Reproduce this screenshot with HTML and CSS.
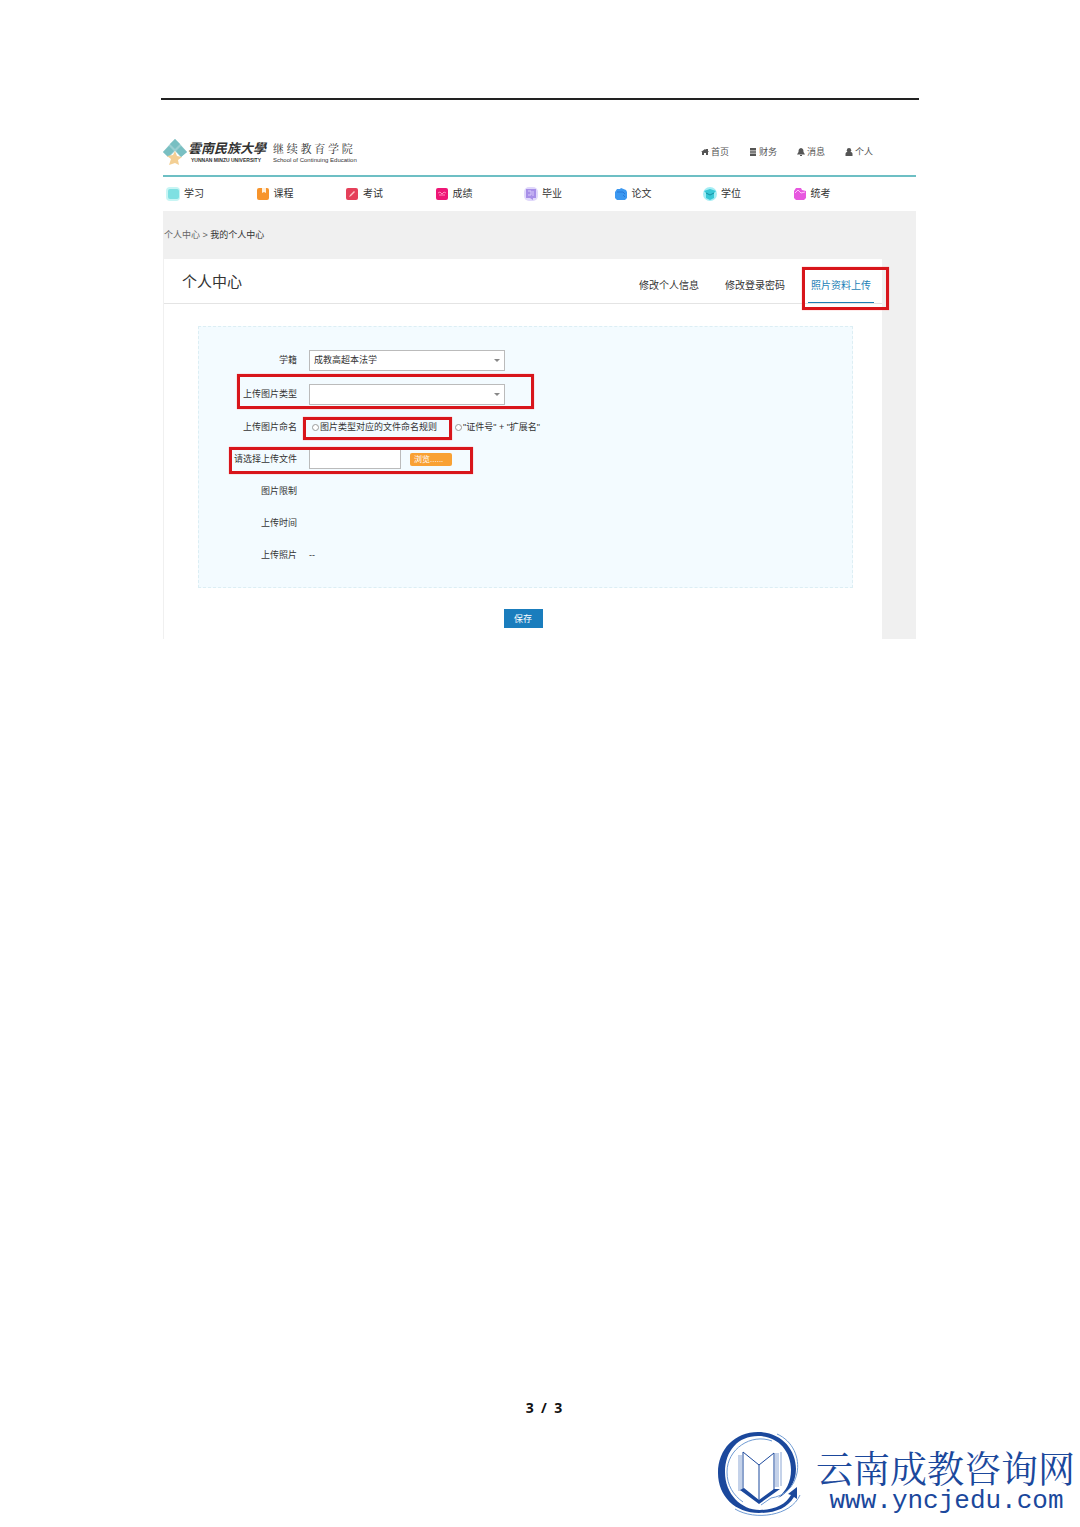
FILE: index.html
```html
<!DOCTYPE html>
<html lang="zh-CN">
<head>
<meta charset="utf-8">
<meta name="viewport" content="width=device-width, initial-scale=1">
<title>个人中心</title>
<link rel="stylesheet" href="styles.css">
</head>
<body>
<main class="sheet">
  <div class="portal">
    <header class="top">
      <div class="brand">
        <svg class="emblem" viewBox="0 0 24 26" aria-hidden="true">
          <path d="M12 0l5 5-5 5-5-5zM6 7l5 5-6 6-5-5zM18 7l6 6-6 5-5-6z" fill="#79bfc2"/>
          <path d="M7 5l5-5 5 5 7 8-6 5-6-6-6 6-6-5z" fill="#79bfc2" opacity=".75"/>
          <path d="M12 12l2 5 5 1-4 3 1 5-4-2-6 2 2-6-4-3 6-1z" fill="#f3cf94"/>
        </svg>
        <div class="school">
          <span class="school-name">雲南民族大學</span>
          <span class="school-en">YUNNAN MINZU UNIVERSITY</span>
        </div>
        <div class="college">
          <span class="college-name">继 续 教 育 学 院</span>
          <span class="college-en">School of Continuing Education</span>
        </div>
      </div>
      <nav class="quick">
        <a href="#"><svg viewBox="0 0 8 8"><path d="M0 4l4-3 1 .8V1h2v2l1 1H7v3H5V5H3v2H1V4z"/></svg>首页</a>
        <a href="#"><svg viewBox="0 0 8 8"><path d="M1 0h6v2H1zM1 2.5h6v1.2H1zM1 4.3h6v1.2H1zM1 6.1h6V8H1z"/></svg>财务</a>
        <a href="#"><svg viewBox="0 0 8 8"><path d="M4 0c2 .3 2.500 1.500 2.500 4L8 6.500H0L1.500 4C1.500 1.500 2 .3 4 0zM3 7h2v1H3z"/></svg>消息</a>
        <a href="#"><svg viewBox="0 0 8 8"><circle cx="4" cy="2.200" r="2.200"/><path d="M.5 8V6c0-1.500 1-2 2-2h3c1 0 2 .5 2 2v2z"/></svg>个人</a>
      </nav>
    </header>

    <nav class="menu">
      <a href="#"><svg viewBox="0 0 14 14"><rect width="14" height="14" rx="4" fill="#c8f5f4"/><rect x="2" y="2" width="11" height="10" rx="2" fill="#7fe0e2"/></svg>学习</a>
      <a href="#"><svg viewBox="0 0 14 14"><rect x="1" y="1" width="12" height="12" rx="2" fill="#f7942c"/><path d="M6 1h4v5L8 5 6 6z" fill="#fff0dc"/></svg>课程</a>
      <a href="#"><svg viewBox="0 0 14 14"><rect x="1" y="1" width="12" height="12" rx="2" fill="#e5405a"/><path d="M4 10l1-2 4-4 1 1-4 4z" fill="#ffc4c8"/></svg>考试</a>
      <a href="#"><svg viewBox="0 0 14 14"><rect x="1" y="1" width="12" height="12" rx="2" fill="#ee1676"/><path d="M3 6l2-1 2 2 2-2 2 1M4 8h6" fill="none" stroke="#ff8abb"/></svg>成绩</a>
      <a href="#"><svg viewBox="0 0 14 14"><rect width="14" height="14" rx="5" fill="#e0d8fb"/><path d="M2 2h10v9H9v2L6 11H2z" fill="#a78fe8"/><path d="M4 4h3v4H4M9 4v5" fill="none" stroke="#d8cbfa"/></svg>毕业</a>
      <a href="#"><svg viewBox="0 0 14 14"><path d="M1 5l2-3h3l1-1 5 2 1 2v6l-2 2H3l-2-2z" fill="#3c98f0"/><path d="M3 5h6l2 2M9 8l2 2" fill="none" stroke="#2678d8"/></svg>论文</a>
      <a href="#"><svg viewBox="0 0 14 14"><circle cx="7" cy="7" r="7" fill="#a5edf4"/><path d="M1 4l6-2 6 2-2 2v5l-4 2-4-2V6z" fill="#38c8d6"/><path d="M3 6l4 2 4-2" fill="none" stroke="#168fa2"/></svg>学位</a>
      <a href="#"><svg viewBox="0 0 14 14"><path d="M1 4l2-3h5l1 2 4 1v7l-2 2H3l-2-2z" fill="#e757df"/><path d="M2 6l3-3 3 3 4-1" fill="none" stroke="#ffc0fa"/></svg>统考</a>
    </nav>

    <div class="content">
      <p class="crumbs"><a href="#">个人中心</a> &gt; <b>我的个人中心</b></p>
      <section class="panel">
        <div class="panel-head">
          <h1>个人中心</h1>
          <nav class="tabs">
            <a href="#">修改个人信息</a>
            <a href="#">修改登录密码</a>
            <a href="#" class="active">照片资料上传<i class="mark mark-tab"></i></a>
          </nav>
        </div>
        <form>
          <div class="fields">
            <div class="row tall">
              <label for="status">学籍</label>
              <span class="drop"><select id="status"><option>成教高超本法学</option></select></span>
            </div>
            <div class="row tall">
              <label for="kind">上传图片类型</label>
              <span class="drop"><select id="kind"><option></option></select></span>
              <i class="mark mark-kind"></i>
            </div>
            <div class="row">
              <span class="label">上传图片命名</span>
              <div class="choices">
                <label><input type="radio" name="naming">图片类型对应的文件命名规则</label>
                <label><input type="radio" name="naming">"证件号" + "扩展名"</label>
              </div>
              <i class="mark mark-naming"></i>
            </div>
            <div class="row">
              <label for="file">请选择上传文件</label>
              <div class="picker"><input type="text" id="file"><button type="button" class="browse">浏览......</button></div>
              <i class="mark mark-file"></i>
            </div>
            <div class="row"><span class="label">图片限制</span></div>
            <div class="row"><span class="label">上传时间</span></div>
            <div class="row"><span class="label">上传照片</span><span>--</span></div>
          </div>
          <div class="actions"><button type="submit" class="save">保存</button></div>
        </form>
      </section>
    </div>
  </div>
</main>

<footer class="foot">
  <p class="page-number">3&nbsp; /&nbsp; 3</p>
  <div class="site">
    <svg class="site-logo" viewBox="0 0 84 87" aria-hidden="true">
      <path fill-rule="evenodd" fill="#1b489c" d="M41 2C64 2 79 19 79 39C79 53 71 63 61 68C69 61 74 52 74 40C74 20 60 6 41 6C21 6 8 21 8 42C8 64 24 80 43 80C58 80 69 74 74 65L71 64L80 57L80 69L77 67C70 78 59 83 42 83C18 83 1 66 1 43C1 19 18 2 41 2Z"/>
      <path d="M55 11C34 3 10 19 10 42C10 55 16 65 26 72M60 4C76 11 83 28 80 43C77 58 67 66 54 68L44 75M18 79C38 91 74 86 83 65" fill="none" stroke="#6f9bd4"/>
      <path d="M22 25v36M24 25v36M59 23v34M61 23v34M64 22v34" stroke="#8aa5d4" fill="none"/>
      <path d="M26 60V22l16 13 15-12v38M42 35v38" fill="none" stroke="#1b489c"/>
      <path d="M23 60l4-2 15 12 15-11 6 0-21 15z" fill="#1b489c"/>
    </svg>
    <div class="site-text">
      <span class="site-name">云南成教咨询网</span>
      <a href="#" class="site-url">www.yncjedu.com</a>
    </div>
  </div>
</footer>
</body>
</html>
```
FILE: styles.css
```css
* { box-sizing: border-box; }

body {
  margin: 0;
  min-height: 100vh;
  display: flex;
  flex-direction: column;
  background: #fff;
  color: #333;
  font: 9px/12px "Liberation Sans", "Noto Sans CJK SC", sans-serif;
}

a { color: inherit; text-decoration: none; }
p, h1 { margin: 0; }
button, input, select { font: inherit; color: inherit; margin: 0; }

.sheet {
  margin: 98px 161px 0;
  border-top: 2px solid #222;
  padding: 32px 3px 0 2px;
}

/* Header */
.top {
  height: 45px;
  display: flex;
  align-items: center;
  justify-content: space-between;
  padding: 0 43px 4px 0;
  border-bottom: 2px solid #6dbfc4;
}
.brand { display: flex; align-items: center; }
.emblem { width: 24px; height: 26px; margin-right: 1px; }
.school, .college { display: flex; flex-direction: column; white-space: nowrap; }
.school { width: 85px; }
.school-name { font-size: 13px; line-height: 18px; font-weight: bold; font-style: italic; }
.school-en { font-size: 5px; line-height: 5px; font-weight: bold; padding-left: 3px; }
.college-name { font: 11px/16px "Liberation Serif", "Noto Serif CJK SC", "Noto Sans CJK SC", serif; padding-top: 2px; }
.college-en { font-size: 6px; line-height: 7px; }

.quick { display: flex; gap: 20px; color: #555; }
.quick a { display: flex; align-items: center; gap: 2px; }
.quick svg { width: 8px; height: 8px; fill: #555; }

/* Main menu */
.menu {
  display: grid;
  grid-template-columns: repeat(8, 1fr);
  height: 34px;
  align-items: center;
  padding: 0 34px 0 3px;
  font-size: 10px;
  line-height: 14px;
}
.menu a { display: flex; align-items: center; gap: 4px; }
.menu svg { width: 14px; height: 14px; }

/* Content */
.content { background: #f0f0f0; padding: 0 34px 0 1px; }
.crumbs { padding: 18px 0; color: #666; }
.crumbs b { font-weight: normal; color: #333; }
.panel { background: #fff; }
.panel-head {
  display: flex;
  justify-content: space-between;
  height: 45px;
  padding: 0 8px 0 18px;
  border-bottom: 1px solid #e4e4e4;
}
.panel h1 { font-size: 15px; line-height: 45px; font-weight: normal; }
.tabs { display: flex; gap: 20px; font-size: 10px; line-height: 32px; align-items: flex-end; }
.tabs a { position: relative; padding: 0 3px; border-bottom: 1px solid transparent; }
.tabs .active { color: #1c7fb6; border-bottom-color: #1c7fb6; }

form { padding: 22px 29px 11px 34px; }
.fields {
  padding: 16px 0;
  background: #f3fbff;
  border: 1px dashed #dceef4;
}
.row { position: relative; display: flex; align-items: center; gap: 12px; height: 32px; }
.tall { height: 34px; }
.row > label, .label { width: 98px; text-align: right; flex: none; }

.drop { position: relative; width: 196px; height: 21px; }
.drop select {
  appearance: none;
  width: 100%;
  height: 100%;
  padding: 0 4px;
  background: #fff;
  border: 1px solid #bbb;
  border-radius: 0;
}
.drop::after {
  content: "";
  position: absolute;
  right: 5px;
  top: 9px;
  border: 3px solid transparent;
  border-top-color: #888;
  border-bottom: 0;
}

.choices { display: flex; gap: 18px; padding-left: 3px; white-space: nowrap; }
.choices label { display: flex; align-items: center; gap: 1px; }
.choices input {
  appearance: none;
  width: 7px;
  height: 7px;
  border: 1px solid #999;
  border-radius: 50%;
  background: #fff;
}

.picker { display: flex; align-items: center; gap: 9px; }
.picker input { width: 92px; height: 20px; padding: 0 4px; border: 1px solid #bbb; background: #fff; }
.browse {
  width: 42px;
  height: 13px;
  padding: 0 4px;
  border: 0;
  border-radius: 2px;
  background: #f9a134;
  color: #fff;
  font-size: 8px;
  line-height: 13px;
  text-align: left;
}
.actions { display: flex; justify-content: center; padding: 21px 5px 0 0; }
.save {
  width: 39px;
  height: 19px;
  padding: 0;
  border: 0;
  background: #1a7dbd;
  color: #fff;
}

/* Red call-out frames laid over the controls */
.mark {
  position: absolute;
  border: 3px solid #d8151b;
  box-shadow: 0 0 1px #ff8080;
  pointer-events: none;
}
.mark-tab { left: -6px; right: -15px; top: -3px; bottom: -8px; }
.mark-kind { left: 38px; width: 297px; top: -3px; height: 35px; }
.mark-naming { left: 104px; width: 149px; top: 6px; height: 23px; }
.mark-file { left: 30px; width: 244px; top: 4px; height: 27px; }

/* Page foot */
.foot { margin-top: auto; padding-bottom: 10px; display: flex; flex-direction: column; }
.page-number {
  padding-left: 8px;
  text-align: center;
  color: #111;
  font: bold 14px/20px "Open Sans", sans-serif;
  margin-bottom: 12px;
}
.site { align-self: flex-end; display: flex; gap: 15px; padding-right: 3px; color: #1b489c; }
.site-logo { width: 84px; height: 87px; }
.site-text { display: flex; flex-direction: column; width: 261px; padding-top: 16px; white-space: nowrap; }
.site-name { font: 37px/42px "Noto Serif CJK SC", "Noto Sans CJK SC", serif; }
.site-url { font: 26px/26px "Liberation Mono", monospace; text-align: center; }
```
